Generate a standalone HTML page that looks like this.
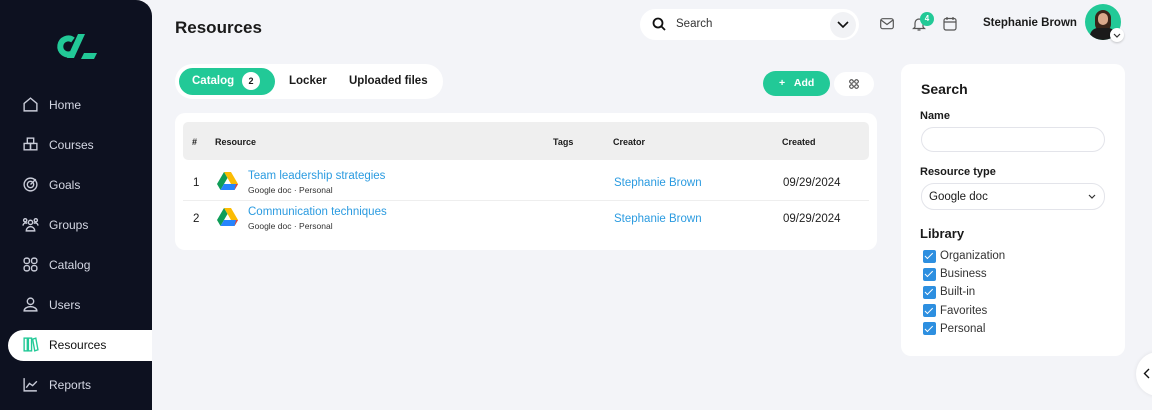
<!DOCTYPE html>
<html><head><meta charset="utf-8"><style>
*{box-sizing:border-box;margin:0;padding:0}
body{width:1152px;height:410px;overflow:hidden;background:#f3f4f8;font-family:"Liberation Sans",sans-serif;position:relative;color:#1a1a1a}
.a{position:absolute}
#sb{left:0;top:0;width:152px;height:410px;background:#0d1120;border-top-right-radius:16px}
.nav{position:absolute;left:22px;color:#d5d8e4;font-size:12px;display:flex;align-items:center;gap:10px}
.nav svg{width:17px;height:17px;stroke:#c9ccd8;fill:none;stroke-width:1.3}
.act{left:8px;top:330px;width:144px;height:31px;background:#fff;border-radius:16px 0 0 16px}
.card{background:#fff;border-radius:10px}
.lnk{color:#2b9be0}
.cb{display:flex;align-items:center;gap:4px;font-size:11.5px;color:#333;height:18.2px}
.cb i{width:13px;height:13px;background:#2d8fe0;border-radius:2px;display:inline-block;position:relative}
.cb i:after{content:"";position:absolute;left:4px;top:1.5px;width:3px;height:6.5px;border:solid #fff;border-width:0 1.6px 1.6px 0;transform:rotate(45deg)}
.inp{border:1px solid #e3e4ea;border-radius:13px;height:25px;width:184px}
</style></head><body>
<div id="sb" class="a">
<svg class="a" style="left:54px;top:31px" width="44" height="30" viewBox="0 0 44 30"><path d="M19 9 A8 8 0 1 0 17 23" fill="none" stroke="#22c997" stroke-width="6"/><path d="M24 3 L31 3 L20 27 L13 27 Z" fill="#22c997"/><path d="M30 22 L43 22 L40 28 L27 28Z" fill="#22c997"/></svg>
<div class="nav" style="top:96px"><svg viewBox="0 0 16 16"><path d="M2 7 L8 2 L14 7 V14 H2Z"/></svg>Home</div>
<div class="nav" style="top:136px"><svg viewBox="0 0 16 16"><rect x="5" y="2" width="6" height="5"/><rect x="2" y="7" width="6" height="6"/><rect x="8" y="7" width="6" height="6"/></svg>Courses</div>
<div class="nav" style="top:176px"><svg viewBox="0 0 16 16"><circle cx="8" cy="8" r="6"/><circle cx="8" cy="8" r="3"/><path d="M8 8 L13 3"/></svg>Goals</div>
<div class="nav" style="top:216px"><svg viewBox="0 0 16 16"><circle cx="8" cy="6" r="2"/><circle cx="3" cy="4" r="1.5"/><circle cx="13" cy="4" r="1.5"/><path d="M4 14 a4 4 0 0 1 8 0Z M1 9 a2.5 2.5 0 0 1 4 -2 M15 9 a2.5 2.5 0 0 0 -4 -2"/></svg>Groups</div>
<div class="nav" style="top:256px"><svg viewBox="0 0 16 16"><rect x="2" y="2" width="5" height="5" rx="2"/><rect x="9" y="2" width="5" height="5" rx="2"/><rect x="2" y="9" width="5" height="5" rx="2"/><rect x="9" y="9" width="5" height="5" rx="2"/></svg>Catalog</div>
<div class="nav" style="top:296px"><svg viewBox="0 0 16 16"><circle cx="8" cy="5" r="3"/><path d="M2 14 a6 4 0 0 1 12 0Z"/></svg>Users</div>
<div class="a act"></div>
<div class="nav" style="top:336px;color:#111"><svg viewBox="0 0 16 16" style="stroke:#22c997"><rect x="2" y="2" width="3" height="12"/><rect x="6" y="2" width="3" height="12"/><path d="M10 3 L13 2 L15 13 L12 14Z"/></svg>Resources</div>
<div class="nav" style="top:376px"><svg viewBox="0 0 16 16"><path d="M2 2 V14 H14 M4 11 L7 7 L10 9 L14 5"/></svg>Reports</div>
</div>

<div class="a" style="left:175px;top:18px;font-size:17px;font-weight:bold">Resources</div>

<div class="a" style="left:640px;top:9px;width:219px;height:31px;background:#fff;border-radius:16px"></div>
<svg class="a" style="left:652px;top:17px" width="14" height="14" viewBox="0 0 14 14"><circle cx="6" cy="6" r="4.5" stroke="#111" stroke-width="1.8" fill="none"/><path d="M9.5 9.5 L13 13" stroke="#111" stroke-width="1.8"/></svg>
<div class="a" style="left:676px;top:18px;font-size:11.5px;color:#333">Search</div>
<div class="a" style="left:830px;top:12px;width:26px;height:26px;border-radius:13px;background:#f1f2f5"></div>
<svg class="a" style="left:837px;top:21px" width="12" height="8"><path d="M1 1 L6 6 L11 1" stroke="#111" stroke-width="1.6" fill="none"/></svg>
<svg class="a" style="left:880px;top:18px" width="14" height="12"><rect x="0.7" y="0.7" width="12.6" height="10" rx="2" fill="none" stroke="#555" stroke-width="1.2"/><path d="M1 2 L7 6.5 L13 2" fill="none" stroke="#555" stroke-width="1.2"/></svg>
<svg class="a" style="left:912px;top:16px" width="14" height="16"><path d="M3 11 V7 a4 4 0 0 1 8 0 V11 L12.5 12.5 H1.5Z M5.5 14 H8.5" fill="none" stroke="#555" stroke-width="1.2"/></svg>
<div class="a" style="left:920px;top:12px;width:14px;height:14px;border-radius:7px;background:#22c997;color:#fff;font-size:8px;font-weight:bold;text-align:center;line-height:14px">4</div>
<svg class="a" style="left:943px;top:16px" width="14" height="15"><rect x="1" y="2.5" width="12" height="11.5" rx="2" fill="none" stroke="#555" stroke-width="1.2"/><path d="M4 1 V4 M10 1 V4 M1 6 H13" stroke="#555" stroke-width="1.2"/></svg>
<div class="a" style="left:983px;top:17px;font-size:11.5px;font-weight:bold">Stephanie Brown</div>
<div class="a" style="left:1085px;top:4px;width:36px;height:36px;border-radius:18px;background:#22c997;overflow:hidden"><div class="a" style="left:10px;top:6px;width:16px;height:22px;border-radius:8px;background:#3a2418"></div><div class="a" style="left:13px;top:9px;width:10px;height:12px;border-radius:5px;background:#d9a88a"></div><div class="a" style="left:5px;top:24px;width:26px;height:16px;border-radius:8px 8px 0 0;background:#1a1a1a"></div></div>
<div class="a" style="left:1110px;top:28px;width:14px;height:14px;border-radius:7px;background:#fff;box-shadow:0 1px 2px rgba(0,0,0,.2)"></div>
<svg class="a" style="left:1113px;top:33px" width="8" height="5"><path d="M1 1 L4 4 L7 1" stroke="#333" stroke-width="1.2" fill="none"/></svg>

<div class="a" style="left:175px;top:64px;width:268px;height:35px;background:#fff;border-radius:18px"></div>
<div class="a" style="left:179px;top:68px;width:96px;height:27px;background:#22c997;border-radius:14px"></div>
<div class="a" style="left:192px;top:75px;font-size:11.5px;font-weight:bold;color:#fff">Catalog</div>
<div class="a" style="left:242px;top:72px;width:18px;height:18px;border-radius:9px;background:#fff;font-size:9px;font-weight:bold;text-align:center;line-height:18px">2</div>
<div class="a" style="left:289px;top:75px;font-size:11.5px;font-weight:bold">Locker</div>
<div class="a" style="left:349px;top:75px;font-size:11.5px;font-weight:bold">Uploaded files</div>

<div class="a" style="left:763px;top:71px;width:67px;height:25px;background:#22c997;border-radius:13px;color:#fff;font-size:10.5px;font-weight:bold;line-height:25px;padding-left:16px">+&nbsp;&nbsp;&nbsp;Add</div>
<div class="a" style="left:834px;top:72px;width:40px;height:24px;background:#fff;border-radius:12px"></div>
<svg class="a" style="left:849px;top:79px" width="10" height="10"><g fill="none" stroke="#333" stroke-width="1"><circle cx="2.5" cy="2.5" r="1.8"/><circle cx="7.5" cy="2.5" r="1.8"/><circle cx="2.5" cy="7.5" r="1.8"/><circle cx="7.5" cy="7.5" r="1.8"/></g></svg>

<div class="a card" style="left:175px;top:113px;width:702px;height:137px"></div>
<div class="a" style="left:183px;top:122px;width:686px;height:38px;background:#efefef;border-radius:5px"></div>
<div class="a" style="left:192px;top:137px;font-size:9px;font-weight:bold">#</div>
<div class="a" style="left:215px;top:137px;font-size:9px;font-weight:bold">Resource</div>
<div class="a" style="left:553px;top:137px;font-size:9px;font-weight:bold">Tags</div>
<div class="a" style="left:613px;top:137px;font-size:9px;font-weight:bold">Creator</div>
<div class="a" style="left:782px;top:137px;font-size:9px;font-weight:bold">Created</div>
<div class="a" style="left:183px;top:200px;width:686px;height:1px;background:#eee"></div>

<div class="a" style="left:193px;top:177px;font-size:11.5px">1</div>
<div class="a" style="left:193px;top:213px;font-size:11.5px">2</div>
<svg class="a" style="left:217px;top:172px" width="21" height="19" viewBox="0 0 21 19"><path d="M7 0 H14 L21 12 L17.5 18Z" fill="#fbbc04"/><path d="M7 0 L0 12 L3.5 18 L10.5 6Z" fill="#0f9d58"/><path d="M3.5 18 L17.5 18 L21 12 L7 12Z" fill="#2684fc"/><path d="M17.5 18 L21 12 L19 12Z" fill="#ea4335"/></svg>
<svg class="a" style="left:217px;top:208px" width="21" height="19" viewBox="0 0 21 19"><path d="M7 0 H14 L21 12 L17.5 18Z" fill="#fbbc04"/><path d="M7 0 L0 12 L3.5 18 L10.5 6Z" fill="#0f9d58"/><path d="M3.5 18 L17.5 18 L21 12 L7 12Z" fill="#2684fc"/><path d="M17.5 18 L21 12 L19 12Z" fill="#ea4335"/></svg>
<div class="a lnk" style="left:248px;top:170px;font-size:11.5px">Team leadership strategies</div>
<div class="a" style="left:248px;top:185px;font-size:8.5px;color:#333">Google doc · Personal</div>
<div class="a lnk" style="left:248px;top:206px;font-size:11.5px">Communication techniques</div>
<div class="a" style="left:248px;top:221px;font-size:8.5px;color:#333">Google doc · Personal</div>
<div class="a lnk" style="left:614px;top:177px;font-size:11.5px">Stephanie Brown</div>
<div class="a lnk" style="left:614px;top:213px;font-size:11.5px">Stephanie Brown</div>
<div class="a" style="left:783px;top:177px;font-size:11.5px;color:#222">09/29/2024</div>
<div class="a" style="left:783px;top:213px;font-size:11.5px;color:#222">09/29/2024</div>

<div class="a card" style="left:901px;top:64px;width:224px;height:292px"></div>
<div class="a" style="left:921px;top:81px;font-size:14px;font-weight:bold">Search</div>
<div class="a" style="left:920px;top:110px;font-size:11px;font-weight:bold">Name</div>
<div class="a inp" style="left:921px;top:127px"></div>
<div class="a" style="left:920px;top:166px;font-size:11px;font-weight:bold">Resource type</div>
<div class="a inp" style="left:921px;top:183px;height:27px;font-size:11.5px;padding:7px 0 0 7px">Google doc</div>
<svg class="a" style="left:1088px;top:194px" width="8" height="5"><path d="M1 1 L4 4 L7 1" stroke="#333" stroke-width="1.2" fill="none"/></svg>
<div class="a" style="left:920px;top:226px;font-size:13px;font-weight:bold">Library</div>
<div class="a" style="left:923px;top:247px">
<div class="cb"><i></i>Organization</div><div class="cb"><i></i>Business</div><div class="cb"><i></i>Built-in</div><div class="cb"><i></i>Favorites</div><div class="cb"><i></i>Personal</div>
</div>
<div class="a" style="left:1136px;top:352px;width:44px;height:44px;border-radius:22px;background:#fff;box-shadow:0 0 4px rgba(0,0,0,.08)"></div>
<svg class="a" style="left:1143px;top:368px" width="7" height="11"><path d="M6 1 L1.5 5.5 L6 10" stroke="#111" stroke-width="1.4" fill="none"/></svg>
</body></html>
